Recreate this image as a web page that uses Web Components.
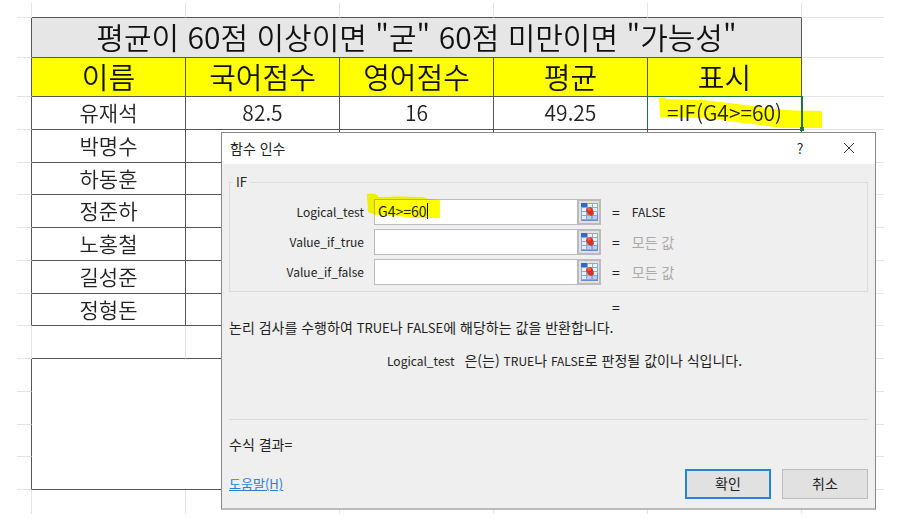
<!DOCTYPE html>
<html lang="ko">
<head>
<meta charset="utf-8">
<meta name="viewport" content="width=device-width, initial-scale=1">
<title>함수 인수</title>
<style>
  body {
    margin: 0;
    background: #fff;
    color: #222;
    font-family: "Noto Sans CJK KR", sans-serif;
  }
</style>
</head>
<body>
<excel-workbook>
  <score-sheet></score-sheet>
  <function-dialog slot="dialog"></function-dialog>
</excel-workbook>

<script>
function attach(el, html) {
  const template = document.createElement("template");
  template.innerHTML = html;
  el.attachShadow({ mode: "open" }).appendChild(template.content.cloneNode(true));
}

class ExcelWorkbook extends HTMLElement {
  constructor() {
    super();
    attach(this, `
      <style>
        :host {
          display: block;
          position: relative;
          padding: 3px 13px 4px 17px;
        }
        /* the dialog floats over the sheet */
        ::slotted([slot="dialog"]) {
          position: absolute;
          top: 132px;
          left: 221px;
          right: 21px;
        }
      </style>
      <slot></slot>
      <slot name="dialog"></slot>
    `);
  }
}
customElements.define("excel-workbook", ExcelWorkbook);

class SelectedCell extends HTMLElement {
  constructor() {
    super();
    attach(this, `
      <style>
        :host {
          display: block;
          position: relative;
          height: 32px;
          line-height: 30px;
        }
        .frame {
          position: absolute;
          inset: -1px -2px -1px -1px;
          border: 2px solid #217346;
          border-width: 1px 2px 1px 1px;
        }
        .handle {
          position: absolute;
          right: -3px;
          bottom: -2px;
          width: 4px;
          height: 4px;
          background: #217346;
        }
        svg {
          position: absolute;
          left: 11px;
          top: 0;
          mix-blend-mode: multiply;
        }
      </style>
      <slot></slot>
      <span class="frame"></span>
      <span class="handle"></span>
      <svg width="164" height="32" viewBox="0 0 164 32" aria-hidden="true">
        <path fill="#ffff00" d="M0 1 L6 1 L7 2 L44 3 Q80 7 100 10 Q125 14 163 14 L163 31 L122 31 Q98 27 75 25 Q50 20 1 20 Z"/>
      </svg>
    `);
  }
}
customElements.define("selected-cell", SelectedCell);

class ScoreSheet extends HTMLElement {
  constructor() {
    super();
    const names = ["박명수", "하동훈", "정준하", "노홍철", "길성준", "정형돈"];
    const rows = names.map((name) => `
      <tr><td class="edge"></td><td class="cell">${name}</td><td class="cell"></td><td class="cell"></td><td class="cell"></td><td class="cell"></td><td></td></tr>`).join("");
    const blank = `<tr><td class="edge"></td><td></td></tr>`;

    attach(this, `
      <style>
        :host {
          display: block;
          font-size: 21px;
          font-weight: 350;
        }
        table {
          width: 100%;
          table-layout: fixed;
          border-collapse: separate;
          border-spacing: 0;
        }
        td, th {
          box-sizing: border-box;
          padding: 0;
          border: solid #e4e4e4;
          border-width: 0 1px 1px 0;
          text-align: center;
          font-weight: 350;
          line-height: 28px;
          white-space: nowrap;
        }
        td:last-child { border-right: 0; }
        tr { height: 33px; }
        tr:nth-child(4n + 2) { height: 32px; }
        tr.ruler { height: 15px; }
        tr.title { height: 40px; }
        tr.head { height: 39px; }
        tr.tail { height: 24px; }
        tr.tail td { border-bottom: 0; }
        tr.over td:not(.edge):not(:last-child) { border-bottom-color: #555; }
        td.edge { border-right-color: #555; }
        tr.ruler .edge, tr.tail .edge, tr.gap .edge { border-right-color: #e4e4e4; }
        .cell, .title th, .head th { border-color: #555; }
        .cell { padding-bottom: 2px; }
        .cell.selected { padding: 0; }
        .title th, .head th {
          padding-bottom: 2px;
          line-height: 34px;
          color: #111;
        }
        .title th {
          padding-bottom: 3px;
          background: #e6e6e6;
          font-size: 30px;
        }
        .head th {
          background: #ffff00;
          font-size: 29px;
        }
        col.stub { width: 15px; }
        col.data { width: 154px; }
      </style>
      <table>
        <colgroup><col class="stub"><col class="data"><col class="data"><col class="data"><col class="data"><col class="data"><col></colgroup>
        <tbody>
          <tr class="ruler over"><td class="edge"></td><td></td><td></td><td></td><td></td><td></td><td></td></tr>
          <tr class="title"><td class="edge"></td><th colspan="5">평균이 60점 이상이면 "굳" 60점 미만이면 "가능성"</th><td></td></tr>
          <tr class="head"><td class="edge"></td><th scope="col">이름</th><th scope="col">국어점수</th><th scope="col">영어점수</th><th scope="col">평균</th><th scope="col">표시</th><td></td></tr>
          <tr><td class="edge"></td><td class="cell">유재석</td><td class="cell">82.5</td><td class="cell">16</td><td class="cell">49.25</td><td class="cell selected"><selected-cell>=IF(G4&gt;=60)</selected-cell></td><td></td></tr>
          ${rows}
          <tr class="gap over"><td class="edge"></td><td></td><td></td><td></td><td></td><td></td><td></td></tr>
          <tr><td class="edge"></td><td class="cell" colspan="5" rowspan="4"></td><td></td></tr>
          ${blank}${blank}${blank}
          <tr class="tail"><td class="edge"></td><td></td><td></td><td></td><td></td><td></td><td></td></tr>
        </tbody>
      </table>
    `);
  }
}
customElements.define("score-sheet", ScoreSheet);

class ArgField extends HTMLElement {
  constructor() {
    super();
    const name = this.getAttribute("name");
    const value = this.getAttribute("value") || "";
    const active = this.hasAttribute("active") ? `
      <svg class="marker" width="74" height="27" viewBox="0 0 74 27" aria-hidden="true">
        <path fill="#ffff00" d="M0 1 Q4 0 9 1 L12 4 Q35 3 56 4 L61 6 L73 7 L73 25 L45 25 Q35 23 22 23 L9 22 L1 19 Z"/>
      </svg>
      <span class="caret"></span>` : "";

    attach(this, `
      <style>
        :host {
          display: grid;
          grid-template-columns: 134px 227px 1fr;
          column-gap: 10px;
          align-items: center;
          height: 26px;
        }
        label {
          text-align: right;
          white-space: nowrap;
          font-size: 12px;
        }
        .box {
          position: relative;
          display: flex;
          height: 26px;
          box-sizing: border-box;
          border: 1px solid #bcbcc0;
        }
        input {
          flex: 1;
          min-width: 0;
          padding: 0 3px 2px;
          border: 0;
          outline: 0;
          background: #fff;
          color: #222;
          font: inherit;
          font-size: 14px;
        }
        button {
          display: grid;
          place-items: center;
          width: 23px;
          padding: 0;
          border: 2px solid #bbb;
          border-width: 1px 1px 1px 2px;
          background: #e1e1e1;
        }
        .marker {
          position: absolute;
          left: -8px;
          top: -7px;
          mix-blend-mode: multiply;
        }
        .caret {
          position: absolute;
          left: 52px;
          top: 3px;
          width: 1px;
          height: 16px;
          background: #000;
        }
        .result {
          display: flex;
          gap: 12px;
          padding-left: 1px;
          white-space: nowrap;
        }
        .value {
          color: var(--value-color, #222);
          font-size: var(--value-size, 12px);
        }
      </style>
      <label for="arg">${name}</label>
      <div class="box">
        <input id="arg" type="text" value="${value}" autocomplete="off" spellcheck="false">
        <button type="button" aria-label="${name}">
          <svg width="17" height="18" viewBox="0 0 17 18" aria-hidden="true">
            <rect width="17" height="18" fill="#8ba8d8"/>
            <rect width="6" height="4" fill="#3567c4"/>
            <g fill="#eaf1fc">
              <rect x="7" y="1" width="4" height="3"/><rect x="12" y="1" width="4" height="3"/>
              <rect x="1" y="5" width="4" height="3"/><rect x="6" y="5" width="4" height="3"/><rect x="12" y="5" width="4" height="3"/>
              <rect x="1" y="9" width="4" height="3"/><rect x="12" y="9" width="4" height="3"/>
              <rect x="1" y="13" width="4" height="3"/>
            </g>
            <g fill="#b9cdf0">
              <rect x="6" y="13" width="4" height="3"/><rect x="12" y="13" width="4" height="3"/>
            </g>
            <path fill="none" stroke="#6c8cc8" d="M0 17.5h17M16.5 10v8"/>
            <path fill="#d9301b" d="M6 5l4-1 2 3 1 4-2 2-3-1-3-4z"/>
            <path fill="#f0603c" d="M6 5l3-1 1 3-3 1z"/>
          </svg>
        </button>
        ${active}
      </div>
      <div class="result"><span>=</span><span class="value"><slot></slot></span></div>
    `);
  }
}
customElements.define("arg-field", ArgField);

class DialogButton extends HTMLElement {
  constructor() {
    super();
    attach(this, `
      <style>
        :host { display: block; }
        button {
          display: block;
          width: 86px;
          height: 30px;
          padding: 0 0 2px;
          border: 1px solid #bdbdbd;
          background: #e1e1e1;
          color: #222;
          font: inherit;
        }
        :host([primary]) button { border: 2px solid #2484d8; }
      </style>
      <button type="button"><slot></slot></button>
    `);
  }
}
customElements.define("dialog-button", DialogButton);

class FunctionDialog extends HTMLElement {
  constructor() {
    super();
    attach(this, `
      <style>
        :host {
          display: block;
          box-sizing: border-box;
          border: 1px solid #888;
          border-bottom: 2px solid #bbb;
          background: #efefef;
          font-size: 14px;
          line-height: 20px;
        }
        header {
          display: flex;
          align-items: center;
          box-sizing: border-box;
          height: 31px;
          padding: 0 19px 2px 8px;
          background: #fff;
        }
        h1 {
          flex: 1;
          margin: 0;
          font-size: 14px;
          font-weight: 400;
        }
        header button {
          display: grid;
          place-items: center;
          width: 14px;
          height: 20px;
          margin-left: 35px;
          padding: 0;
          border: 0;
          background: none;
          color: #222;
          font: inherit;
        }
        main { padding: 8px 7px 9px 7px; }
        fieldset {
          display: grid;
          gap: 4px;
          min-width: 0;
          margin: 0;
          padding: 7px 0 6px;
          border: 1px solid #dcdcdc;
        }
        legend {
          margin-left: 3px;
          padding: 0 3px;
          font-size: 13px;
        }
        .muted {
          --value-color: #aaa;
          --value-size: 14px;
        }
        p { margin: 0; }
        .total { padding: 5px 0 0 383px; }
        .help { padding-bottom: 13px; }
        .arg {
          display: flex;
          align-items: baseline;
          gap: 10px;
          padding: 0 0 49px 158px;
        }
        .latin {
          font-size: 12px;
          line-height: 12px;
        }
        .help .latin { font-size: 13px; }
        .outcome {
          padding: 14px 0 15px;
          border-top: 1px solid #dcdcdc;
        }
        footer {
          display: flex;
          align-items: center;
          gap: 11px;
        }
        a {
          margin-right: auto;
          color: #2a7fd4;
          font-size: 13px;
        }
      </style>
      <header>
        <h1>함수 인수</h1>
        <button type="button" aria-label="도움말">?</button>
        <button type="button" aria-label="닫기">
          <svg width="12" height="12" viewBox="0 0 12 12" aria-hidden="true"><path d="M1 1l10 10M11 1L1 11" stroke="#333" fill="none"/></svg>
        </button>
      </header>
      <main>
        <fieldset>
          <legend>IF</legend>
          <arg-field name="Logical_test" value="G4&gt;=60" active>FALSE</arg-field>
          <arg-field class="muted" name="Value_if_true">모든 값</arg-field>
          <arg-field class="muted" name="Value_if_false">모든 값</arg-field>
        </fieldset>
        <p class="total">=</p>
        <p class="help">논리 검사를 수행하여 <span class="latin">TRUE</span>나 <span class="latin">FALSE</span>에 해당하는 값을 반환합니다.</p>
        <p class="arg"><span class="latin">Logical_test</span><span>은(는) <span class="latin">TRUE</span>나 <span class="latin">FALSE</span>로 판정될 값이나 식입니다.</span></p>
        <p class="outcome">수식 결과=</p>
        <footer>
          <a href="#help">도움말(H)</a>
          <dialog-button primary>확인</dialog-button>
          <dialog-button>취소</dialog-button>
        </footer>
      </main>
    `);
  }
}
customElements.define("function-dialog", FunctionDialog);
</script>
</body>
</html>
